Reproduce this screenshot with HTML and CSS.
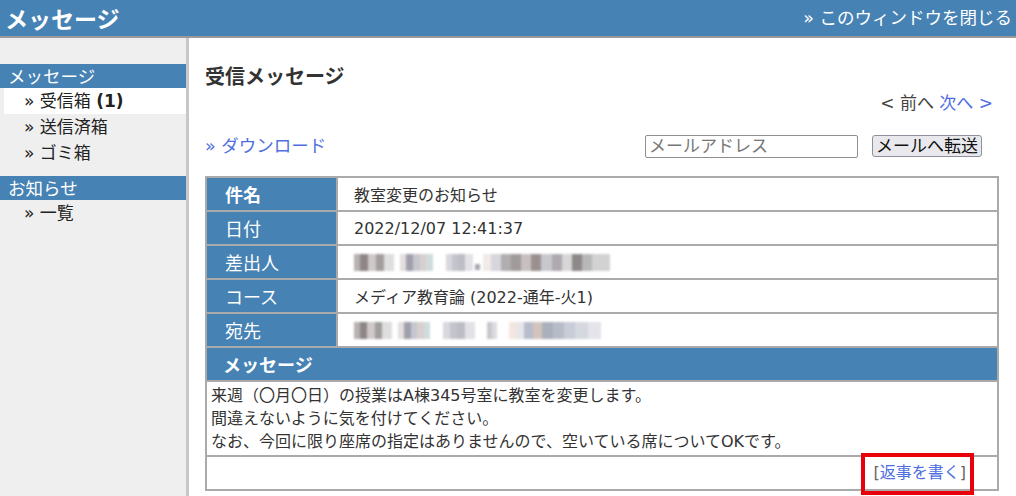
FILE: index.html
```html
<!DOCTYPE html>
<html lang="ja">
<head>
<meta charset="utf-8">
<title>メッセージ</title>
<link rel="stylesheet" href="styles.css">
</head>
<body>
<header class="topbar">
  <div class="topbar-title">メッセージ</div>
  <a class="topbar-close" href="#">» このウィンドウを閉じる</a>
</header>
<div class="layout">
  <nav class="sidebar">
    <div class="side-head">メッセージ</div>
    <a class="side-item active" href="#">» 受信箱 <b>(1)</b></a>
    <a class="side-item" href="#">» 送信済箱</a>
    <a class="side-item" href="#">» ゴミ箱</a>
    <div class="side-head second">お知らせ</div>
    <a class="side-item" href="#">» 一覧</a>
  </nav>
  <main class="main">
    <h1 class="page-title">受信メッセージ</h1>
    <div class="pager"><span class="prev">&lt; 前へ</span> <a class="link" href="#">次へ &gt;</a></div>
    <div class="toolrow">
      <a class="link download" href="#">» ダウンロード</a>
      <div class="forward">
        <input class="mail-input" type="text" placeholder="メールアドレス">
        <button class="mail-btn" type="button">メールへ転送</button>
      </div>
    </div>
    <table class="msg">
      <tr><th class="bold">件名</th><td>教室変更のお知らせ</td></tr>
      <tr><th>日付</th><td>2022/12/07 12:41:37</td></tr>
      <tr><th>差出人</th><td>
        <span class="mosaic">
          <span class="mz a w40"></span><span class="mz b w33"></span><span class="mz c w27"></span><span class="mz dot"></span><span class="mz d w127"></span>
        </span>
      </td></tr>
      <tr><th>コース</th><td>メディア教育論 (2022-通年-火1)</td></tr>
      <tr><th>宛先</th><td>
        <span class="mosaic">
          <span class="mz a w38"></span><span class="mz b w32"></span><span class="mz c w32"></span><span class="mz e w10"></span><span class="mz f w92"></span>
        </span>
      </td></tr>
      <tr><th class="section" colspan="2">メッセージ</th></tr>
      <tr><td class="body" colspan="2">来週（〇月〇日）の授業はA棟345号室に教室を変更します。<br>間違えないように気を付けてください。<br>なお、今回に限り座席の指定はありませんので、空いている席についてOKです。</td></tr>
      <tr><td class="reply" colspan="2"><span class="reply-box">[<a class="link" href="#">返事を書く</a>]</span></td></tr>
    </table>
  </main>
</div>
</body>
</html>
```

FILE: styles.css
```css
* { box-sizing: border-box; }
html, body { margin: 0; padding: 0; }
body {
  font-family: "DejaVu Sans", "Noto Sans CJK JP", sans-serif;
  color: #333;
  background: #fff;
  width: 1016px;
  height: 496px;
  overflow: hidden;
}
a { text-decoration: none; }
.link { color: #4f6fe0; }

.topbar {
  height: 38px;
  background: #4682b4;
  border-bottom: 2px solid #9a9a9a;
  display: flex;
  align-items: center;
  justify-content: space-between;
  padding: 0 4px 0 5px;
}
.topbar-title {
  font-family: "Noto Sans CJK JP", sans-serif;
  color: #fff;
  font-size: 23px;
  font-weight: bold;
  line-height: 36px;
}
.topbar-close {
  color: #fff;
  font-size: 17.5px;
  line-height: 36px;
}

.layout {
  display: flex;
  height: 458px;
}
.sidebar {
  width: 189px;
  flex: none;
  background: #efefef;
  border-right: 3px solid #c8c8c8;
  padding-top: 26px;
  display: flex;
  flex-direction: column;
}
.side-head {
  font-family: "Noto Sans CJK JP", sans-serif;
  background: #4682b4;
  color: #fff;
  font-size: 17.5px;
  height: 24px;
  line-height: 24px;
  padding-left: 8px;
}
.side-head.second { margin-top: 10px; }
.side-item {
  color: #222;
  font-size: 17px;
  height: 26px;
  line-height: 26px;
  padding-left: 24px;
}
.side-item.active {
  background: #fff;
  margin-left: 4px;
  padding-left: 20px;
}

.main {
  flex: 1;
  padding: 24px 16px 0 16px;
}
.page-title {
  margin: 0;
  font-family: "Noto Sans CJK JP", sans-serif;
  font-size: 20px;
  font-weight: bold;
  line-height: 28px;
  color: #333;
}
.pager {
  margin-top: 1px;
  text-align: right;
  font-size: 17px;
  line-height: 24px;
  padding-right: 7px;
}
.prev { color: #444; }

.toolrow {
  margin-top: 18px;
  height: 26px;
  display: flex;
  align-items: center;
  justify-content: space-between;
}
.download { font-size: 17.5px; line-height: 26px; }
.forward {
  display: flex;
  align-items: center;
  gap: 14px;
  padding-right: 18px;
}
.mail-input {
  width: 213px;
  height: 23px;
  border: 1px solid #8f8f8f;
  border-radius: 2px;
  padding: 0 3px;
  font-family: inherit;
  font-size: 17px;
  color: #333;
}
.mail-input::placeholder { color: #777; }
.mail-btn {
  height: 22px;
  padding: 0 3px;
  font-family: inherit;
  font-size: 17px;
  line-height: 20px;
  color: #111;
  background: #e9e9ed;
  border: 1px solid #8f8f9d;
  border-radius: 3px;
}

.msg {
  margin-top: 17px;
  width: 794px;
  border-collapse: collapse;
  border: 2px solid #aaa;
}
.msg th, .msg td {
  border: 2px solid #aaa;
  height: 34px;
  padding: 0;
}
.msg th {
  width: 131px;
  background: #4682b4;
  color: #fff;
  font-family: "Noto Sans CJK JP", sans-serif;
  font-size: 18px;
  font-weight: normal;
  text-align: left;
  padding-left: 18px;
}
.msg th.bold { font-weight: bold; }
.msg th.section {
  font-weight: bold;
  padding-left: 16px;
}
.msg td {
  font-size: 16px;
  padding-left: 16px;
  color: #333;
}
.msg td.body {
  padding: 2px 4px;
  line-height: 23px;
  height: 74px;
}
.msg td.reply {
  text-align: right;
  padding-right: 31px;
  color: #666;
  line-height: 22px;
}
.reply-box {
  position: relative;
}
.reply-box::after {
  content: "";
  position: absolute;
  left: -12px;
  right: -8px;
  top: -10px;
  bottom: -13px;
  border: 4px solid #e8000b;
}

.mosaic {
  display: inline-flex;
  align-items: center;
  height: 18px;
  vertical-align: middle;
  filter: blur(0.8px);
}
.mz {
  display: inline-block;
  height: 17px;
  margin-right: 6px;
}
.mz.w40 { width: 40px; }
.mz.w38 { width: 38px; }
.mz.w33 { width: 33px; }
.mz.w32 { width: 32px; }
.mz.w27 { width: 27px; margin-right: 2px; margin-left: 7px; }
.mz.w10 { width: 10px; margin-right: 12px; margin-left: 6px; }
.mz.w127 { width: 127px; }
.mz.w92 { width: 92px; }
.mz.w32:nth-child(3) { margin-left: 7px; }
.mz.dot { width: 5px; height: 6px; margin-top: 9px; margin-right: 3px; background: #a8a8b0; }
.mz.a {
  background: linear-gradient(90deg, #b9b2b2 0 15%, #8e8686 15% 35%, #cfc9c9 35% 55%, #a29e9e 55% 75%, #dedede 75% 100%);
}
.mz.b {
  background: linear-gradient(90deg, #e4dede 0 18%, #a0a0aa 18% 40%, #c6c6d0 40% 60%, #d8cfcf 60% 80%, #cfdcdc 80% 100%);
}
.mz.c {
  background: linear-gradient(90deg, #d8d8de 0 22%, #c4c4cc 22% 45%, #bdbdc6 45% 70%, #e2e2e6 70% 100%);
}
.mz.d {
  background: linear-gradient(90deg, #f0eaea 0 6%, #d6d6dc 6% 14%, #b0aeb0 14% 22%, #a09a9a 22% 30%, #c8c0c0 30% 38%, #9a9090 38% 46%, #c8c8cc 46% 54%, #aeaab0 54% 62%, #d8d6d6 62% 70%, #8e8888 70% 78%, #b8b8b8 78% 86%, #d2d2d2 86% 100%);
}
.mz.e {
  background: linear-gradient(90deg, #c8c8cc 0 50%, #dcdce0 50% 100%);
}
.mz.f {
  background: linear-gradient(90deg, #f4e6de 0 8%, #e6e6ea 8% 16%, #b8bccc 16% 26%, #d2c4bc 26% 36%, #aab0bc 36% 48%, #b8bcc8 48% 60%, #c8ccd6 60% 72%, #d6d8e0 72% 86%, #e4e4ea 86% 100%);
}
```
